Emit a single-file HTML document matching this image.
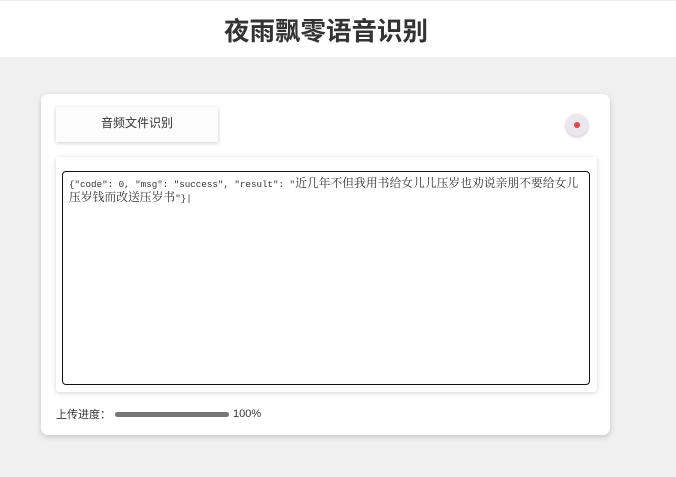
<!DOCTYPE html>
<html><head><meta charset="utf-8"><style>
body{margin:0;width:676px;height:477px;background:#f0f0f0;font-family:"Liberation Sans","Noto Sans CJK SC",sans-serif;position:relative;overflow:hidden}
.hd{position:absolute;left:0;top:0;width:676px;height:57px;background:#fff;border-top:1px solid #eee;box-sizing:border-box}
.hd h1{margin:0;text-align:center;font-size:25.5px;line-height:62px;color:#333;font-weight:bold;padding-right:24px}
.card{position:absolute;left:41px;top:94px;width:569px;height:341px;background:#fff;border-radius:7px;box-shadow:0 2px 6px rgba(0,0,0,.18)}
.btn{position:absolute;left:15px;top:13px;width:162px;height:35px;background:#fcfcfc;box-shadow:0 1px 4px rgba(0,0,0,.2);font-size:12px;color:#333;text-align:center;line-height:33px}
.rec{position:absolute;left:525px;top:20px;width:22px;height:22px;border-radius:50%;background:#ece6ee;box-shadow:0 1px 3px rgba(0,0,0,.25)}
.rec:after{content:"";position:absolute;left:8px;top:8px;width:6px;height:6px;border-radius:50%;background:#e04848}
.panel{position:absolute;left:15px;top:63px;width:541px;height:235px;background:#fff;box-shadow:0 1px 5px rgba(0,0,0,.18);border-radius:3px}
.ta{position:absolute;left:6px;top:14px;width:528px;height:214px;box-sizing:border-box;border:1.5px solid #111;border-radius:4px;padding:5px 6px;font-family:"Liberation Serif","Noto Serif CJK SC",serif;font-size:11.8px;line-height:13px;color:#333}
.ta .l{font-family:"Liberation Mono",monospace;font-size:9.2px}
.pg{position:absolute;left:15px;top:312px;font-size:11px;color:#333;display:flex;align-items:center}
.bar{width:114px;height:5px;background:#777;border-radius:3px;margin:0 4px 0 4px}
</style></head><body>
<div class="hd"><h1>夜雨飘零语音识别</h1></div>
<div class="card">
<div class="btn">音频文件识别</div>
<div class="rec"></div>
<div class="panel"><div class="ta"><span class="l">{"code": 0, "msg": "success", "result": "</span>近几年不但我用书给女儿儿压岁也劝说亲朋不要给女儿压岁钱而改送压岁书<span class="l">"}|</span></div></div>
<div class="pg">上传进度：<div class="bar"></div>100%</div>
</div>
</body></html>
